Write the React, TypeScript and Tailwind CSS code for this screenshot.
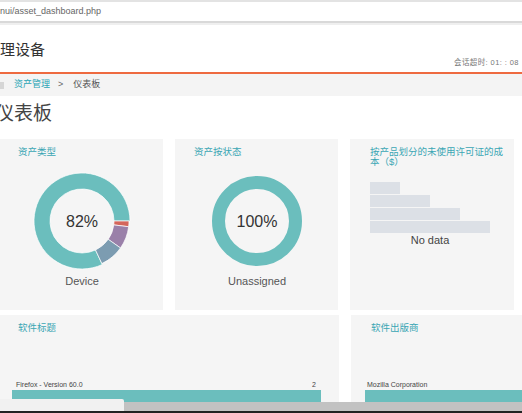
import React from 'react'

const FONT = "font-['Liberation_Sans','Noto_Sans_CJK_SC',sans-serif]"

function sector(cx: number, cy: number, r0: number, r1: number, a0: number, a1: number) {
  const rad = (a: number) => (a * Math.PI) / 180
  const pt = (r: number, a: number) => `${(cx + r * Math.cos(rad(a))).toFixed(2)} ${(cy + r * Math.sin(rad(a))).toFixed(2)}`
  const large = a1 - a0 > 180 ? 1 : 0
  return `M ${pt(r1, a0)} A ${r1} ${r1} 0 ${large} 1 ${pt(r1, a1)} L ${pt(r0, a1)} A ${r0} ${r0} 0 ${large} 0 ${pt(r0, a0)} Z`
}

const slices = [
  { from: 65, to: 360, color: '#6bbebd', outer: 48 },
  { from: 0, to: 7, color: '#d4665c', outer: 47 },
  { from: 7, to: 35, color: '#9a80a9', outer: 47 },
  { from: 35, to: 65, color: '#7c9cb1', outer: 47 },
]

function TypeDonut() {
  return (
    <svg width="100" height="100" viewBox="0 0 100 100">
      {slices.map((s, i) => (
        <path key={i} d={sector(50, 50, 32, s.outer, s.from, s.to)} fill={s.color} stroke="#ffffff" strokeWidth="0.7" />
      ))}
      <text x="50" y="56" textAnchor="middle" fontSize="16" fill="#333" fontFamily="Liberation Sans, sans-serif">
        82%
      </text>
    </svg>
  )
}

function StatusDonut() {
  return (
    <svg width="100" height="100" viewBox="0 0 100 100">
      <circle cx="50" cy="50" r="38.5" fill="none" stroke="#6bbebd" strokeWidth="13" />
      <text x="50" y="56" textAnchor="middle" fontSize="16" fill="#333" fontFamily="Liberation Sans, sans-serif">
        100%
      </text>
    </svg>
  )
}

function CardTitle({ children }: { children: React.ReactNode }) {
  return <div className="text-[9.5px] leading-[10px] text-[#3aa6b4]">{children}</div>
}

export default function App() {
  return (
    <div className={`${FONT} w-[522px] h-[413px] overflow-hidden bg-white flex flex-col`}>
      <div className="h-[402px] overflow-hidden flex flex-col shrink-0">
        {/* address bar */}
        <div className="h-[2px] bg-[#e3e3e3]" />
        <div className="h-[19px] bg-white flex items-center text-[9px] text-[#666] whitespace-nowrap">
          nui/asset_dashboard.php
        </div>
        <div className="h-[2px] bg-[#d9d9d9]" />
        <div className="h-[2px] bg-[#efefef]" />

        {/* header */}
        <div className="h-[47px] pt-[17px] shrink-0">
          <div className="text-[15px] leading-[16px] text-[#333] whitespace-nowrap">理设备</div>
          <div className="h-[10px] pl-[454px] text-[7.5px] leading-[10px] tracking-[0.4px] text-[#777] whitespace-nowrap">
            会话超时: 01: : 08
          </div>
        </div>
        <div className="h-[2px] bg-[#ee6a40] shrink-0" />

        {/* breadcrumb */}
        <div className="h-[22px] bg-[#f4f4f4] flex items-center text-[9px] whitespace-nowrap shrink-0">
          <div className="w-[4px] h-[7px] bg-[#d6d6d6]" />
          <span className="ml-[10px] text-[#2aa5b6]">资产管理</span>
          <span className="ml-[8px] text-[#666]">&gt;</span>
          <span className="ml-[10px] text-[#555]">仪表板</span>
        </div>

        {/* page title */}
        <div className="h-[43px] pt-[8px] shrink-0">
          <div className="-ml-[5px] text-[19px] leading-[20px] text-[#444] whitespace-nowrap">仪表板</div>
        </div>

        {/* row 1 */}
        <div className="flex gap-[12px] h-[171px] shrink-0">
          <div className="w-[163px] bg-[#f5f5f5] pt-[8px] flex flex-col">
            <div className="pl-[18px]">
              <CardTitle>资产类型</CardTitle>
            </div>
            <div className="flex flex-col items-center mt-[14px] pl-[1px]">
              <TypeDonut />
              <div className="mt-[4px] text-[11px] leading-[13px] text-[#555]">Device</div>
            </div>
          </div>
          <div className="w-[163px] bg-[#f5f5f5] pt-[8px] flex flex-col">
            <div className="pl-[19px]">
              <CardTitle>资产按状态</CardTitle>
            </div>
            <div className="flex flex-col items-center mt-[14px] pl-[1px]">
              <StatusDonut />
              <div className="mt-[4px] text-[11px] leading-[13px] text-[#555]">Unassigned</div>
            </div>
          </div>
          <div className="w-[164px] bg-[#f5f5f5] pt-[8px] pl-[20px] flex flex-col">
            <div className="w-[136px]">
              <CardTitle>按产品划分的未使用许可证的成本（$）</CardTitle>
            </div>
            <div className="mt-[15px] w-[120px] flex flex-col gap-[1px]">
              <div className="h-[12px] w-[30px] bg-[#dce0e6]" />
              <div className="h-[12px] w-[60px] bg-[#dce0e6]" />
              <div className="h-[12px] w-[90px] bg-[#dce0e6]" />
              <div className="h-[12px] w-[120px] bg-[#dce0e6]" />
              <div className="text-center text-[11px] leading-[13px] text-[#444]">No data</div>
            </div>
          </div>
        </div>

        {/* row 2 */}
        <div className="flex gap-[12px] mt-[5px] flex-1 min-h-0">
          <div className="w-[339px] shrink-0 bg-[#f5f5f5] pt-[8px] flex flex-col">
            <div className="pl-[18px]">
              <CardTitle>软件标题</CardTitle>
            </div>
            <div className="mt-[48px] pl-[16px] pr-[23px] flex justify-between text-[7px] leading-[8px] text-[#444]">
              <span>Firefox - Version 60.0</span>
              <span>2</span>
            </div>
            <div className="mt-[1px] ml-[12px] w-[309px] h-[14px] bg-[#6bbebd]" />
          </div>
          <div className="flex-1 bg-[#f5f5f5] pt-[8px] flex flex-col">
            <div className="pl-[20px]">
              <CardTitle>软件出版商</CardTitle>
            </div>
            <div className="mt-[48px] pl-[16px] text-[7px] leading-[8px] text-[#444]">Mozilla Corporation</div>
            <div className="mt-[1px] ml-[14px] h-[14px] bg-[#6bbebd]" />
          </div>
        </div>
      </div>

      {/* scrollbar strip */}
      <div className="relative h-[9px] bg-[#c2c2c2] shrink-0">
        <div className="absolute left-0 bottom-0 w-[124px] h-[12px] bg-[#f1f1f1] rounded-tr-[2px]" />
      </div>
      <div className="h-[2px] bg-[#222] shrink-0" />
    </div>
  )
}
